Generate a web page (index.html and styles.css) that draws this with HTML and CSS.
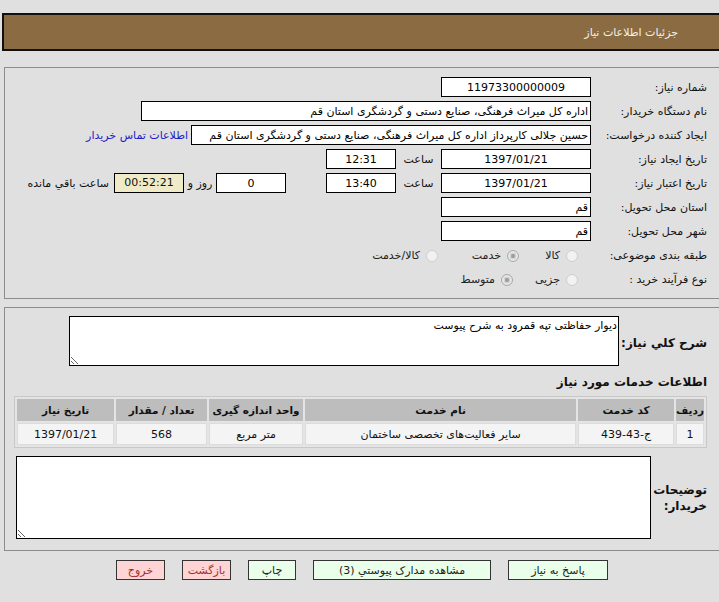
FILE: index.html
```html
<!DOCTYPE html>
<html lang="fa">
<head>
<meta charset="utf-8">
<title>جزئیات اطلاعات نیاز</title>
<link rel="stylesheet" href="styles.css">
</head>
<body>
<div class="page">
  <div class="header"><span class="title">جزئیات اطلاعات نیاز</span></div>

  <div class="panel info">
    <div class="row">
      <span class="lbl">شماره نیاز:</span>
      <input class="field w150 center" value="11973300000009" readonly>
    </div>
    <div class="row">
      <span class="lbl">نام دستگاه خریدار:</span>
      <input class="field w450" value="اداره کل میراث فرهنگی، صنایع دستی و گردشگری استان قم" readonly>
    </div>
    <div class="row">
      <span class="lbl">ایجاد کننده درخواست:</span>
      <input class="field w400" value="حسین جلالی کارپرداز اداره کل میراث فرهنگی، صنایع دستی و گردشگری استان قم" readonly>
      <a class="link" href="#">اطلاعات تماس خریدار</a>
    </div>
    <div class="row">
      <span class="lbl">تاریخ ایجاد نیاز:</span>
      <input class="field w150 center" value="1397/01/21" readonly>
      <span class="hour">ساعت</span>
      <input class="field w70 center" value="12:31" readonly>
    </div>
    <div class="row">
      <span class="lbl">تاریخ اعتبار نیاز:</span>
      <input class="field w150 center" value="1397/01/21" readonly>
      <span class="hour">ساعت</span>
      <input class="field w70 center" value="13:40" readonly>
      <input class="field w70 center days" value="0" readonly>
      <span class="dayand">روز و</span>
      <span class="timer">00:52:21</span>
      <span class="remain">ساعت باقي مانده</span>
    </div>
    <div class="row">
      <span class="lbl">استان محل تحویل:</span>
      <input class="field w150" value="قم" readonly>
    </div>
    <div class="row">
      <span class="lbl">شهر محل تحویل:</span>
      <input class="field w150" value="قم" readonly>
    </div>
    <div class="row radio-row">
      <span class="lbl">طبقه بندی موضوعی:</span>
      <span class="opt o1"><span class="radio"></span>کالا</span>
      <span class="opt o2"><span class="radio on"></span>خدمت</span>
      <span class="opt"><span class="radio"></span>کالا/خدمت</span>
    </div>
    <div class="row radio-row last">
      <span class="lbl">نوع فرآیند خرید :</span>
      <span class="opt o3"><span class="radio"></span>جزیی</span>
      <span class="opt"><span class="radio on"></span>متوسط</span>
    </div>
  </div>

  <div class="panel details">
    <div class="desc-row">
      <span class="blbl">شرح کلي نیاز:</span>
      <textarea class="desc" readonly>دیوار حفاظتی تپه قمرود به شرح پیوست</textarea>
    </div>
    <div class="section-title">اطلاعات خدمات مورد نیاز</div>
    <table class="grid">
      <thead>
        <tr>
          <th class="c1">ردیف</th>
          <th class="c2">کد خدمت</th>
          <th class="c3">نام خدمت</th>
          <th class="c4">واحد اندازه گیری</th>
          <th class="c5">تعداد / مقدار</th>
          <th class="c6">تاریخ نیاز</th>
        </tr>
      </thead>
      <tbody>
        <tr>
          <td>1</td>
          <td>ج-43-439</td>
          <td>سایر فعالیت‌های تخصصی ساختمان</td>
          <td>متر مربع</td>
          <td>568</td>
          <td>1397/01/21</td>
        </tr>
      </tbody>
    </table>
    <div class="note-row">
      <span class="blbl note-lbl">توضیحات<br>خریدار:</span>
      <textarea class="note" readonly></textarea>
    </div>
  </div>

  <div class="buttons">
    <button class="btn green b1">پاسخ به نیاز</button>
    <button class="btn green b2">مشاهده مدارک پیوستي (3)</button>
    <button class="btn green b3">چاپ</button>
    <button class="btn pink b4">بازگشت</button>
    <button class="btn pink b4">خروج</button>
  </div>
</div>
</body>
</html>
```

FILE: styles.css
```css
html, body {
  margin: 0;
  padding: 0;
  background: #e0e0e0;
}

body {
  font-family: "DejaVu Sans", sans-serif;
  font-size: 11px;
  color: #111;
}

.page {
  width: 720px;
  margin: 13px 0 0 2px;
}

.header {
  height: 34px;
  border: 2px solid #111;
  background: #8b6c42;
  direction: rtl;
  display: flex;
  align-items: center;
  padding-right: 42px;
}

.title {
  color: #f4f0e8;
  font-size: 11px;
}

.panel {
  margin: 16px 0 0 2px;
  border: 1px solid #8c8c8c;
  direction: rtl;
  padding-right: 14px;
}

.info {
  padding-top: 7px;
  padding-bottom: 7px;
}

.row {
  display: flex;
  align-items: center;
  height: 24px;
}

.radio-row {
  height: 23px;
  margin-top: 1px;
}

.lbl {
  width: 116px;
  flex: none;
  white-space: nowrap;
}

.field {
  box-sizing: border-box;
  height: 20px;
  border: 1px solid #000;
  background: #fff;
  font-family: "DejaVu Sans", sans-serif;
  font-size: 11px;
  color: #000;
  padding: 0 2px;
  margin: 0;
  direction: rtl;
  outline: none;
}

.center {
  text-align: center;
}

.w150 { width: 150px; }
.w450 { width: 450px; }
.w400 { width: 400px; }
.w70 { width: 70px; }

.link {
  color: #1c1cc8;
  text-decoration: none;
  margin-right: 3px;
  white-space: nowrap;
}

.hour {
  width: 45px;
  text-align: center;
  flex: none;
}

.days {
  margin-right: 40px;
}

.dayand {
  width: 32px;
  text-align: center;
  flex: none;
  white-space: nowrap;
}

.timer {
  box-sizing: border-box;
  width: 70px;
  height: 20px;
  border: 1px solid #000;
  background: #efebc9;
  text-align: center;
  line-height: 18px;
  flex: none;
}

.remain {
  margin-right: 5px;
  white-space: nowrap;
}

.opt {
  display: flex;
  align-items: center;
  white-space: nowrap;
  color: #222;
}

.o1 { width: 59px; margin-right: 13px; }
.o2 { width: 81px; }
.o3 { width: 65px; margin-right: 13px; }

.radio {
  box-sizing: border-box;
  width: 12px;
  height: 12px;
  border-radius: 50%;
  border: 1px solid #cfcfcf;
  background: #f2f2f2;
  margin-left: 6px;
  flex: none;
  position: relative;
}

.radio.on {
  border-color: #a8a8a8;
  background: #e6e6e6;
}

.radio.on::after {
  content: "";
  position: absolute;
  left: 2px;
  top: 2px;
  width: 6px;
  height: 6px;
  border-radius: 50%;
  background: #9a9a9a;
  box-shadow: inset 0 0 0 1px #d8d8d8;
}

.details {
  margin-top: 8px;
  padding-top: 8px;
  padding-bottom: 11px;
}

.desc-row,
.note-row {
  display: flex;
  align-items: center;
}

.blbl {
  font-weight: bold;
  font-size: 12px;
  white-space: nowrap;
}

.desc-row .blbl {
  width: 88px;
  flex: none;
  padding-top: 3px;
}

textarea {
  box-sizing: border-box;
  border: 1px solid #000;
  background: #fff;
  font-family: "DejaVu Sans", sans-serif;
  font-size: 11px;
  color: #000;
  direction: rtl;
  padding: 2px 1px;
  margin: 0;
  outline: none;
}

.desc {
  width: 550px;
  height: 50px;
}

.section-title {
  font-weight: bold;
  font-size: 12px;
  margin-top: 8px;
  height: 16px;
  line-height: 16px;
}

.grid {
  margin-top: 6px;
  table-layout: fixed;
  border: 1px solid #c8c8c8;
  border-spacing: 2px;
  background: #e4e4e4;
}

.grid th {
  background: #bdbdbd;
  font-weight: bold;
  font-size: 10.5px;
  height: 22px;
  padding: 0;
  white-space: nowrap;
}

.grid td {
  background: #f4f4f4;
  text-align: center;
  height: 20px;
  padding: 0;
  border: 1px solid #dcdcdc;
  white-space: nowrap;
}

.grid th.c1 { width: 26px; }
.grid th.c2 { width: 96px; }
.grid th.c3 { width: 271px; }
.grid th.c4 { width: 94px; }
.grid th.c5 { width: 91px; }
.grid th.c6 { width: 97px; }

.note-row {
  margin-top: 8px;
}

.note-lbl {
  width: 56px;
  flex: none;
  line-height: 16px;
}

.note {
  width: 635px;
  height: 83px;
}

.buttons {
  display: flex;
  justify-content: center;
  direction: rtl;
  gap: 17px;
  margin-top: 9px;
}

.btn {
  box-sizing: border-box;
  height: 20px;
  border: 1px solid #333;
  font-family: "DejaVu Sans", sans-serif;
  font-size: 11px;
  color: #222;
  padding: 0;
  white-space: nowrap;
  overflow: visible;
}

.green { background: #eaffea; }
.pink { background: #ffd4d4; color: #a03030; }

.b1 { width: 100px; }
.b2 { width: 178px; }
.b3 { width: 48px; }
.b4 { width: 49px; }
```
